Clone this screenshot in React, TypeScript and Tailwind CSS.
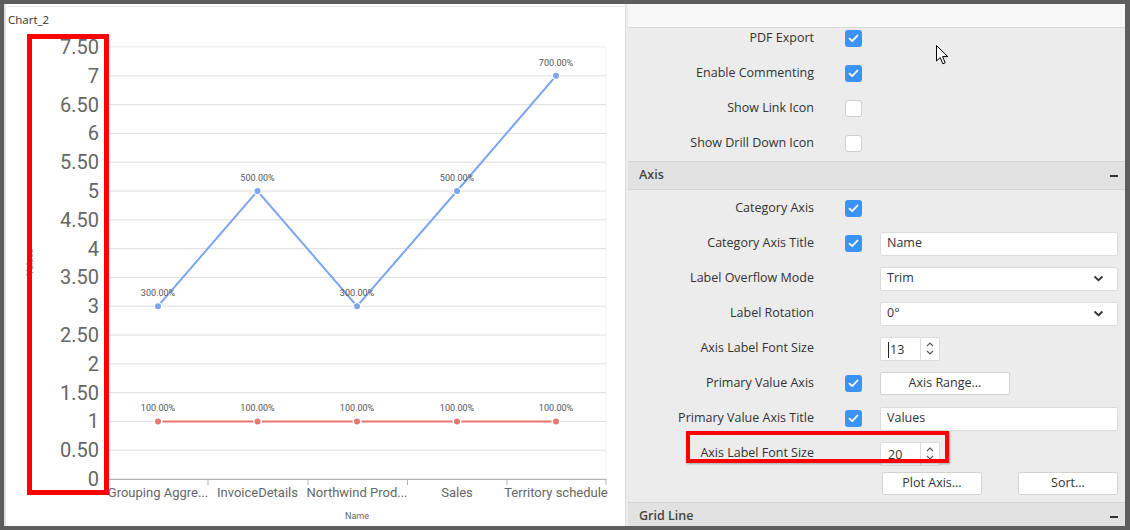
import React from 'react';

const FONT_UI = { fontFamily: '"Open Sans", "Noto Sans", sans-serif' };
const FONT_CHART = 'Roboto, "Liberation Sans", sans-serif';

const categories = ['Grouping Aggre...', 'InvoiceDetails', 'Northwind Prod...', 'Sales', 'Territory schedule'];
const centers = [158, 257.5, 357, 457, 556];
const blue = [3, 5, 3, 5, 7];
const red = [1, 1, 1, 1, 1];

const yOf = (v: number) => 479 - v * 57.6;

function Chart() {
    const grid = Array.from({ length: 16 }, (_, i) => i);
    return (
        <svg width={621} height={522} className="block">
            <g transform="translate(-4 -4)">
                <rect x={4} y={4} width={2} height={522} fill="#e2e2e2" />
                <rect x={4} y={6} width={621} height={1} fill="#ececec" />
                <text x={8} y={23.5} fontSize={11.5} fill="#333" fontFamily='"Open Sans", sans-serif'>
                    Chart_2
                </text>
                <rect x={108.5} y={46.5} width={497.5} height={432.5} fill="none" stroke="#f2f2f2" />
                {grid.map((i) => (
                    <line key={i} x1={108} x2={606} y1={479 - i * 28.8} y2={479 - i * 28.8} stroke={i === 15 ? '#f0f0f0' : '#dedede'} />
                ))}
                {grid.map((i) => (
                    <text
                        key={'l' + i}
                        x={99}
                        y={479 - i * 28.8 + 7}
                        fontSize={20}
                        textAnchor="end"
                        fill="#666"
                        fontFamily={FONT_CHART}
                    >
                        {i % 2 === 0 ? String(i / 2) : (i / 2).toFixed(2)}
                    </text>
                ))}
                <text x={33} y={262} fontSize={9} fill="#888" textAnchor="middle" transform="rotate(-90 33 262)" fontFamily={FONT_CHART}>
                    Values
                </text>
                <line x1={108} x2={606.5} y1={479.5} y2={479.5} stroke="#b3b3b3" />
                {[108.5, 208, 308, 407.5, 507, 606].map((x) => (
                    <line key={x} x1={x} x2={x} y1={479} y2={485} stroke="#b3b3b3" />
                ))}
                {categories.map((c, i) => (
                    <text key={c} x={centers[i]} y={497} fontSize={13} textAnchor="middle" fill="#666" fontFamily={FONT_CHART}>
                        {c}
                    </text>
                ))}
                <text x={357} y={519} fontSize={9} textAnchor="middle" fill="#666" fontFamily={FONT_CHART}>
                    Name
                </text>

                <polyline
                    points={centers.map((x, i) => `${x},${yOf(red[i])}`).join(' ')}
                    fill="none"
                    stroke="#e8776f"
                    strokeWidth={2}
                />
                <polyline
                    points={centers.map((x, i) => `${x},${yOf(blue[i])}`).join(' ')}
                    fill="none"
                    stroke="#7ba6f3"
                    strokeWidth={2}
                />
                {centers.map((x, i) => (
                    <g key={'r' + i}>
                        <circle cx={x} cy={yOf(red[i])} r={3} fill="#e8776f" stroke="#fff" strokeWidth={3} paintOrder="stroke" />
                        <text x={x} y={yOf(red[i]) - 10} fontSize={9} textAnchor="middle" fill="#555" fontFamily={FONT_CHART}>
                            100.00%
                        </text>
                    </g>
                ))}
                {centers.map((x, i) => (
                    <g key={'b' + i}>
                        <circle cx={x} cy={yOf(blue[i])} r={3} fill="#7ba6f3" stroke="#fff" strokeWidth={2} paintOrder="stroke" />
                        <text x={x} y={yOf(blue[i]) - 10} fontSize={9} textAnchor="middle" fill="#555" fontFamily={FONT_CHART}>
                            {blue[i] * 100}.00%
                        </text>
                    </g>
                ))}
            </g>
        </svg>
    );
}

function Check({ on }: { on: boolean }) {
    if (!on) return <div className="w-[17px] h-[17px] rounded-[3px] bg-white border border-[#cfcfcf]" />;
    return (
        <div className="w-[17px] h-[17px] rounded-[3px] bg-[#3d92f5] flex items-center justify-center">
            <svg width="11" height="9" viewBox="0 0 11 9">
                <path d="M1.5 4.6 L4.2 7.2 L9.5 1.5" fill="none" stroke="#fff" strokeWidth="1.8" strokeLinecap="round" strokeLinejoin="round" />
            </svg>
        </div>
    );
}

function TextBox({ value }: { value: string }) {
    return (
        <div className="w-[238px] h-[24px] bg-white border border-[#dcdcdc] rounded-[2px] flex items-center px-[6px] text-[#333]">
            {value}
        </div>
    );
}

function Select({ value }: { value: string }) {
    return (
        <div className="w-[238px] h-[24px] bg-white border border-[#dcdcdc] rounded-[2px] flex items-center justify-between pl-[6px] pr-[13px] text-[#333]">
            <span>{value}</span>
            <svg width="11" height="7" viewBox="0 0 11 7">
                <path d="M1.5 1.5 L5.5 5.2 L9.5 1.5" fill="none" stroke="#333" strokeWidth="1.8" />
            </svg>
        </div>
    );
}

function NumberBox({ value, caret }: { value: string; caret?: boolean }) {
    return (
        <div className="w-[60px] h-[24px] bg-white border border-[#dcdcdc] rounded-[2px] flex text-[#333]">
            <div className="flex-1 flex items-center pl-[7px] pt-[3px]">
                {caret && <span className="w-px h-[16px] bg-[#222] mr-px" />}
                {value}
            </div>
            <div className="w-[19px] border-l border-[#dcdcdc] flex flex-col items-center justify-center gap-[3px]">
                <svg width="8" height="5" viewBox="0 0 8 5">
                    <path d="M1 4 L4 1 L7 4" fill="none" stroke="#555" strokeWidth="1.1" />
                </svg>
                <svg width="8" height="5" viewBox="0 0 8 5">
                    <path d="M1 1 L4 4 L7 1" fill="none" stroke="#555" strokeWidth="1.1" />
                </svg>
            </div>
        </div>
    );
}

function Button({ label, width }: { label: string; width: string }) {
    return (
        <div className={`${width} h-[23px] bg-white border border-[#d2d2d2] rounded-[2px] flex items-center justify-center text-[#333]`}>
            {label}
        </div>
    );
}

function Row({ label, check, children }: { label: string; check?: boolean; children?: React.ReactNode }) {
    return (
        <div className="h-[21px] flex items-center">
            <div className="w-[186px] text-right text-[#333] whitespace-nowrap">{label}</div>
            <div className="w-[17px] ml-[31px] mr-[18px]">{check !== undefined && <Check on={check} />}</div>
            {children}
        </div>
    );
}

function Header({ title }: { title: string }) {
    return (
        <div className="h-[29px] shrink-0 bg-[#e2e2e2] border-y border-[#d4d4d4] flex items-center justify-between pl-[11px] pr-[7px]">
            <span className="font-semibold text-[#444]">{title}</span>
            <span className="w-[8px] h-[2px] bg-[#333]" />
        </div>
    );
}

export default function App() {
    return (
        <div className="relative w-[1130px] h-[530px] bg-[#5e5e5e] flex pt-[4px] pl-[4px] pr-[5px] pb-[4px] overflow-hidden" style={FONT_UI}>
            <div className="w-[621px] h-[522px] bg-white">
                <Chart />
            </div>
            <div className="w-[3px] bg-[#ececec] border-l border-[#dcdcdc]" />
            <div className="flex-1 flex flex-col bg-[#ececec] text-[12.5px] overflow-hidden">
                <div className="h-[24px] shrink-0 bg-[#f8f8f8] border-b border-[#dadada]" />
                <div className="flex flex-col gap-[14px] pb-[7px]">
                    <Row label="PDF Export" check={true} />
                    <Row label="Enable Commenting" check={true} />
                    <Row label="Show Link Icon" check={false} />
                    <Row label="Show Drill Down Icon" check={false} />
                </div>
                <Header title="Axis" />
                <div className="flex flex-col gap-[14px] pt-[8px]">
                    <Row label="Category Axis" check={true} />
                    <Row label="Category Axis Title" check={true}>
                        <TextBox value="Name" />
                    </Row>
                    <Row label="Label Overflow Mode">
                        <Select value="Trim" />
                    </Row>
                    <Row label="Label Rotation">
                        <Select value="0°" />
                    </Row>
                    <Row label="Axis Label Font Size">
                        <NumberBox value="13" caret />
                    </Row>
                    <Row label="Primary Value Axis" check={true}>
                        <Button label="Axis Range..." width="w-[130px]" />
                    </Row>
                    <Row label="Primary Value Axis Title" check={true}>
                        <TextBox value="Values" />
                    </Row>
                    <Row label="Axis Label Font Size">
                        <NumberBox value="20" />
                    </Row>
                </div>
                <div className="h-[23px] mt-[8px] mb-[7px] shrink-0 flex gap-[36px] pl-[254px]">
                    <Button label="Plot Axis..." width="w-[100px]" />
                    <Button label="Sort..." width="w-[100px]" />
                </div>
                <Header title="Grid Line" />
            </div>

            <div className="absolute left-[27px] top-[34px] w-[82px] h-[461px] border-[5px] border-[#ff0000]" />
            <div className="absolute left-[686px] top-[431px] w-[263px] h-[32px] border-[4px] border-[#ff0000] shadow-[1px_1px_2px_rgba(0,0,0,0.3)]" />

            <svg className="absolute left-[936px] top-[45px]" width="14" height="21" viewBox="0 0 14 21">
                <path d="M0.5 0.5 L0.5 16 L4.2 12.5 L6.8 18.8 L9.2 17.8 L6.6 11.6 L11.8 11.6 Z" fill="#fff" stroke="#000" strokeWidth="1" strokeLinejoin="round" />
            </svg>
        </div>
    );
}
